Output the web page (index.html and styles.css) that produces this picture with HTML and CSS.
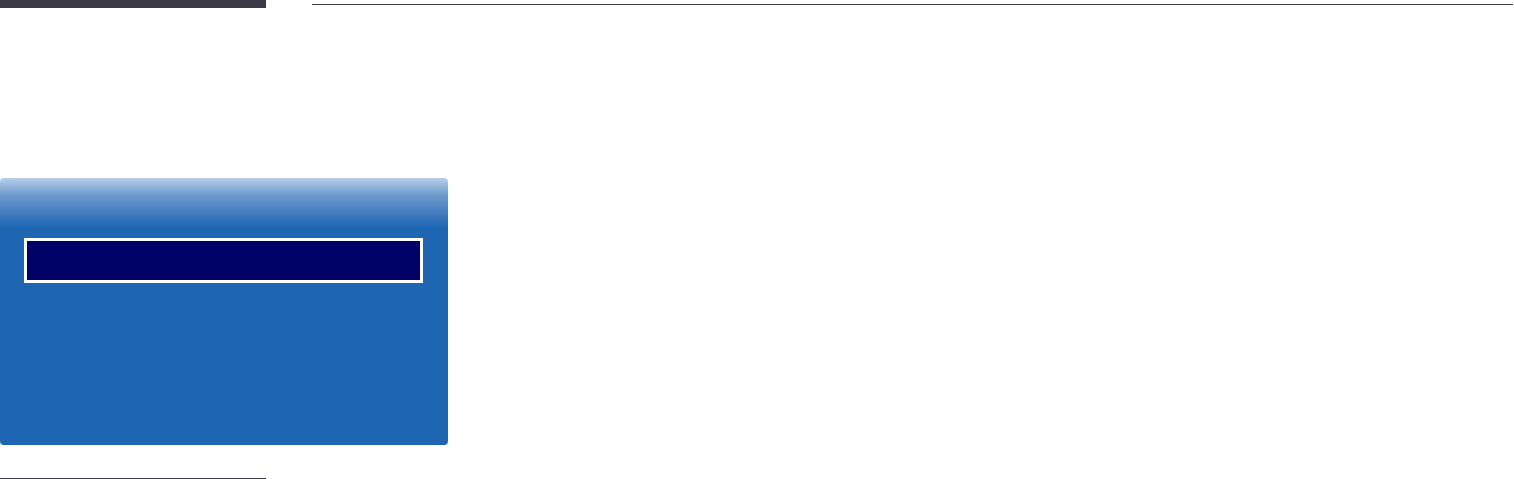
FILE: index.html
```html
<!DOCTYPE html>
<html lang="en">
<head>
    <meta charset="UTF-8">
    <title>Menu</title>
    <link rel="stylesheet" href="styles.css">
</head>
<body>
    <header class="page-head">
        <div class="head-bar"></div>
        <div class="head-rule"></div>
    </header>

    <!-- on-screen menu panel -->
    <div class="menu-panel">
        <div class="menu-item selected"></div>
    </div>

    <div class="foot-rule"></div>
</body>
</html>
```

FILE: styles.css
```css
body {
    margin: 0;
    background-color: #fff;
    font-family: 'Liberation Sans', Arial, sans-serif;
}

.page-head {
    display: flex;
    height: 8px;
}

.head-bar {
    width: 266px;
    height: 8px;
    background-color: #3d3a48;
}

.head-rule {
    flex: 1;
    height: 1px;
    margin: 4px 1px 0 46px;
    background-color: #3d3a48;
}

.menu-panel {
    box-sizing: border-box;
    width: 448px;
    height: 267px;
    margin-top: 170px;
    padding: 60px 0 0 24px;
    border-radius: 4px;
    background: linear-gradient(to bottom, #b7cee7 0px, #6b98cc 18px, #1e66b1 50px, #1e66b1 100%);
}

.menu-item {
    box-sizing: border-box;
    width: 399px;
    height: 45px;
    border: 3px solid #fff;
}

.menu-item.selected {
    background-color: #000066;
}

.foot-rule {
    width: 266px;
    height: 1px;
    margin-top: 33px;
    background-color: #3d3a48;
}
```
